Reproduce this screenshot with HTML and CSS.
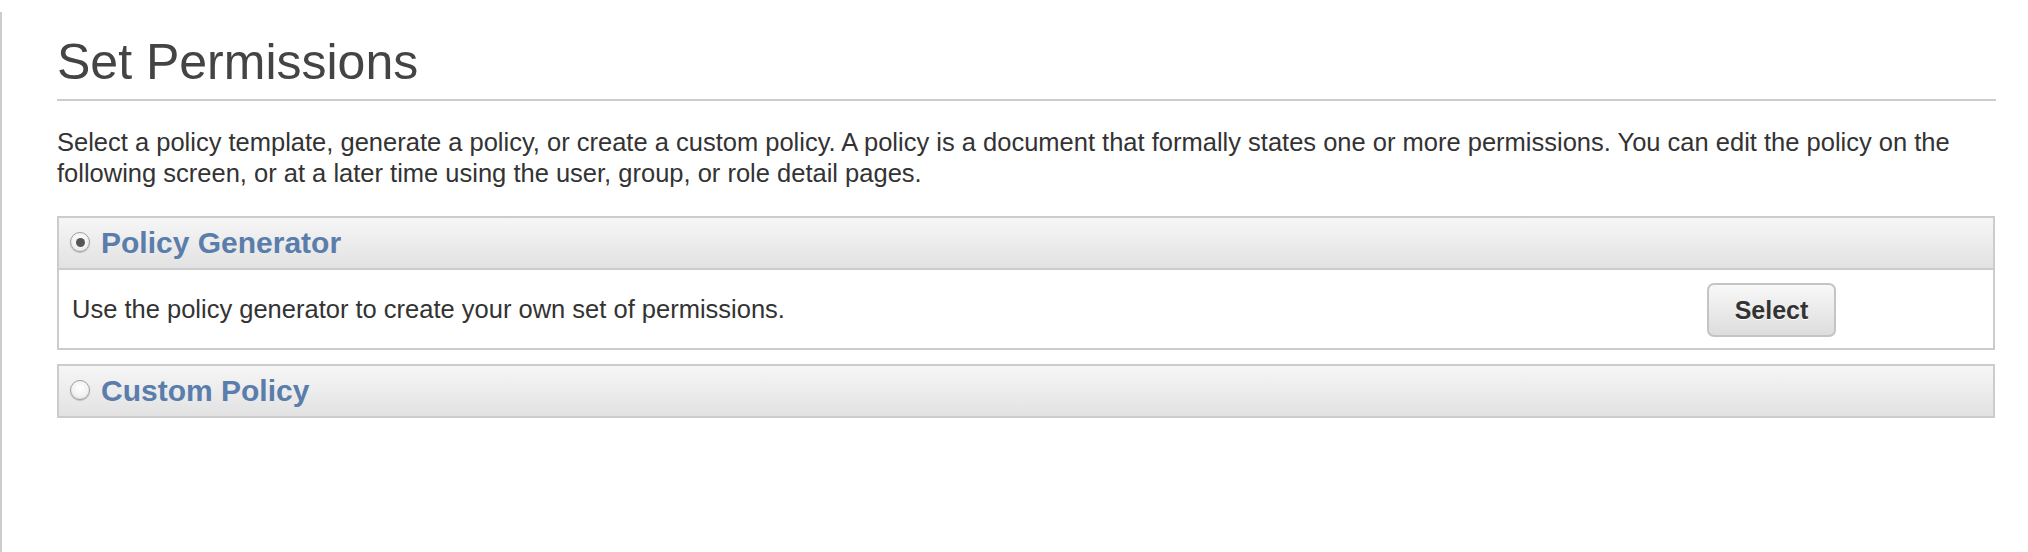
FILE: index.html
```html
<!DOCTYPE html>
<html lang="en">
<head>
<meta charset="utf-8">
<title>Set Permissions</title>
<link rel="stylesheet" href="styles.css">
</head>
<body>
<div class="page">
  <h1 class="title">Set Permissions</h1>
  <p class="intro">Select a policy template, generate a policy, or create a custom policy. A policy is a document that formally states one or more permissions. You can edit the policy on the following screen, or at a later time using the user, group, or role detail pages.</p>

  <section class="panel">
    <div class="panel-head">
      <span class="radio radio-checked"></span>
      <span class="panel-title">Policy Generator</span>
    </div>
    <div class="panel-body">
      <span class="panel-text">Use the policy generator to create your own set of permissions.</span>
      <button class="btn">Select</button>
    </div>
  </section>

  <section class="panel panel-second">
    <div class="panel-head">
      <span class="radio"></span>
      <span class="panel-title">Custom Policy</span>
    </div>
  </section>
</div>
</body>
</html>
```

FILE: styles.css
```css
html, body {
  margin: 0;
  padding: 0;
  background: #ffffff;
}

body {
  font-family: "Liberation Sans", Arial, Helvetica, sans-serif;
  color: #333333;
}

.page {
  margin-top: 12px;
  min-height: 540px;
  border-left: 2px solid #cccccc;
  padding: 20px 33px 0 55px;
  box-sizing: border-box;
}

.title {
  margin: 0 -1px 0 0;
  font-size: 50px;
  font-weight: normal;
  line-height: 60px;
  color: #444444;
  padding-bottom: 7px;
  border-bottom: 2px solid #cccccc;
}

.intro {
  margin: 26px 0 0 0;
  font-size: 25.5px;
  line-height: 31px;
  color: #333333;
}

.panel {
  margin-top: 27px;
  border: 2px solid #cccccc;
}

.panel-second {
  margin-top: 14px;
}

.panel-head {
  height: 50px;
  display: flex;
  align-items: center;
  padding-left: 11px;
  background: linear-gradient(to bottom, #f6f6f6 0%, #e2e2e2 100%);
}

.panel-body {
  border-top: 2px solid #cccccc;
  height: 78px;
  display: flex;
  align-items: center;
  justify-content: space-between;
  padding-left: 13px;
  padding-right: 157px;
}

.radio {
  width: 18px;
  height: 18px;
  border-radius: 50%;
  border: 1px solid #a0a0a0;
  background: radial-gradient(circle at 50% 40%, #ffffff 0%, #f2f2f2 55%, #d8d8d8 100%);
  box-shadow: 0 1px 1px rgba(0, 0, 0, 0.2);
  display: flex;
  align-items: center;
  justify-content: center;
  margin-right: 11px;
  margin-top: -2px;
}

.radio-checked::after {
  content: "";
  width: 9px;
  height: 9px;
  border-radius: 50%;
  background: #555555;
}

.panel-title {
  font-size: 30px;
  font-weight: bold;
  color: #5a7dab;
  line-height: 50px;
}

.panel-text {
  font-size: 25.5px;
  color: #333333;
}

.btn {
  width: 129px;
  height: 54px;
  font-family: "Liberation Sans", Arial, Helvetica, sans-serif;
  font-size: 25px;
  font-weight: bold;
  color: #333333;
  text-shadow: 0 1px 0 #ffffff;
  border: 2px solid #c4c4c4;
  border-radius: 7px;
  background: linear-gradient(to bottom, #f8f8f8 0%, #dddddd 100%);
  padding: 0;
  margin-top: 2px;
}
```
